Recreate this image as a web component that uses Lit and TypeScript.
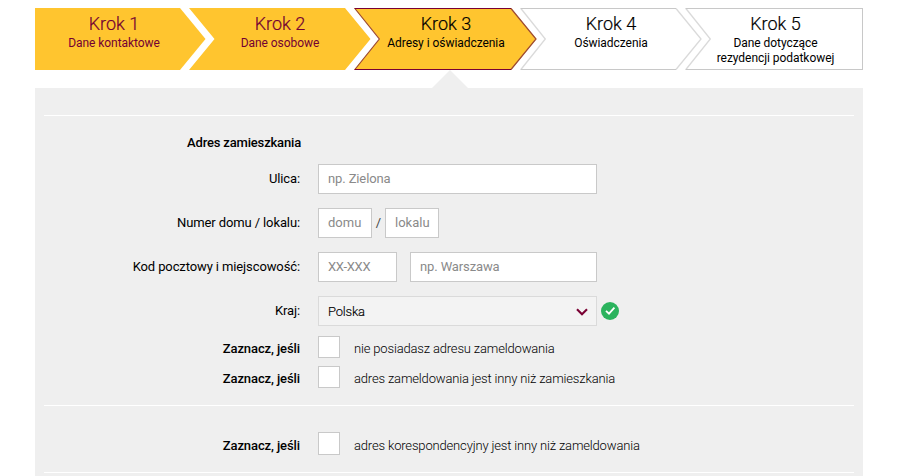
import { LitElement, html, svg, css } from "lit";
import { customElement } from "lit/decorators.js";
import { classMap } from "lit/directives/class-map.js";

type StepState = "done" | "current" | "next";
interface Step {
  title: string;
  lines: string[];
  state: StepState;
  width: number;
  center: number;
}

const STEPS: Step[] = [
  { title: "Krok 1", lines: ["Dane kontaktowe"], state: "done", width: 171, center: 79 },
  { title: "Krok 2", lines: ["Dane osobowe"], state: "done", width: 182, center: 91 },
  { title: "Krok 3", lines: ["Adresy i oświadczenia"], state: "current", width: 183, center: 92 },
  { title: "Krok 4", lines: ["Oświadczenia"], state: "next", width: 182, center: 91 },
  { title: "Krok 5", lines: ["Dane dotyczące", "rezydencji podatkowej"], state: "next", width: 178, center: 90.5 },
];

@customElement("step-bar")
export class StepBar extends LitElement {
  static styles = css`
    :host { display: block; }
    .steps { display: flex; height: 62px; }
    .step { display: grid; grid-template-columns: 0; flex: none; margin-left: -17px; height: 62px; }
    .step:first-child { margin-left: 0; }
    .shape, .text { grid-area: 1 / 1; }
    .shape { display: block; overflow: visible; }
    .done .shape { fill: #ffc52f; }
    .current .shape { fill: #ffc52f; }
    .side, .edge { fill: none; stroke-width: 1; }
    .current .side { stroke: #9c4a35; stroke-width: 1.2; }
    .current .edge { stroke: #7a0033; }
    .next .shape { fill: #fff; }
    .next .side { stroke: #dadada; stroke-width: 1.3; }
    .next .edge { stroke: #c8c8c8; }
    .text { padding-top: 4px; text-align: center; color: #000; white-space: nowrap; }
    .done .text { color: #730033; }
    .title { font-size: 18px; line-height: 23px; font-weight: 300; -webkit-text-stroke: 0.2px; }
    .line { font-size: 12px; line-height: 15px; letter-spacing: -0.05px; }
    .title + .line { padding-top: 1px; }
  `;

  private shape(step: Step, first: boolean, last: boolean) {
    const w = step.width;
    const r = last ? w : w - 26;
    const tip = last ? "" : `L${w - 0.5} 31`;
    const notch = first ? "" : "L25.5 31";
    const inner = last ? w - 0.5 : r;
    return html`<svg class="shape" width=${w} height="62" viewBox="0 0 ${w} 62">
      <path d="M0 0H${r}${tip}L${r} 62H0${notch}Z" />
      ${step.state === "done" ? "" : svg`
        <path class="side" d="M.9 .5L25.3 31L.9 61.5" />
        ${last ? "" : svg`<path class="side" d="M${r} .5L${w - 1} 31L${r} 61.5" />`}
        <path class="edge" d="M.5 .5H${inner}M.5 61.5H${inner}" />
        ${last ? svg`<path class="edge" d="M${w - 0.5} 0V62" />` : ""}`}
    </svg>`;
  }

  render() {
    return html`<nav class="steps">
      ${STEPS.map((s, i) => html`
        <div class=${classMap({ step: true, [s.state]: true })} style="width:${s.width}px">
          ${this.shape(s, i === 0, i === STEPS.length - 1)}
          <div class="text" style="width:${s.center * 2}px">
            <div class="title">${s.title}</div>
            ${s.lines.map((l) => html`<div class="line">${l}</div>`)}
          </div>
        </div>`)}
    </nav>`;
  }
}

@customElement("check-row")
export class CheckRow extends LitElement {
  static properties = { text: {} };
  declare text: string;
  static styles = css`
    :host { display: grid; grid-template-columns: 265px 1fr; column-gap: 18px; align-items: center; height: var(--box-height, 22px); }
    .label { text-align: right; font-weight: 500; padding-top: var(--text-drop, 3px); letter-spacing: -0.1px; }
    .choice { display: flex; align-items: center; }
    .box { box-sizing: border-box; width: 22px; height: var(--box-height, 22px); border: 1px solid #c9c9c9; background: #fff; }
    .caption { margin-left: 14px; font-weight: 300; padding-top: var(--text-drop, 3px); letter-spacing: -0.165px; }
  `;
  render() {
    return html`<span class="label">Zaznacz, jeśli</span>
      <span class="choice"><span class="box"></span><span class="caption">${this.text}</span></span>`;
  }
}

@customElement("app-root")
export class AppRoot extends LitElement {
  static styles = css`
    :host {
      display: block; box-sizing: border-box; height: 476px; overflow: hidden;
      padding: 8px 37px 0 35px; background: #fff; color: #000;
      font-family: Roboto, "Liberation Sans", sans-serif; font-size: 13px; line-height: 16px;
    }
    .pointer { display: block; margin-left: 397px; }
    .panel { background: #efefef; height: 388px; box-sizing: border-box; padding-top: 27px; }
    .rule { height: 1px; margin: 0 9px; background: #fff; }
    .heading { width: 266px; margin-top: 19px; text-align: right; font-weight: 500; letter-spacing: -0.17px; }
    .fields { display: grid; row-gap: 14px; margin-top: 13px; }
    .row { display: grid; grid-template-columns: 265px 1fr; column-gap: 18px; align-items: center; height: 30px; }
    .label { text-align: right; letter-spacing: -0.11px; }
    .controls { display: flex; align-items: center; }
    .input {
      box-sizing: border-box; height: 30px; padding: 6px 9px; border: 1px solid #c9c9c9;
      background: #fff; color: #8a8a8a; letter-spacing: -0.12px;
    }
    .street { width: 279px; }
    .short { width: 54px; letter-spacing: 0; }
    .zip { width: 79px; margin-right: 13px; letter-spacing: -0.3px; }
    .city { width: 187px; }
    .slash { width: 13px; text-align: center; color: #444; }
    .select {
      display: flex; align-items: center; justify-content: space-between; width: 279px;
      padding: 1px 8px 0 9px; border-color: #dadada; background: #f3f3f3; color: #000;
      font-weight: 300; letter-spacing: -0.2px; -webkit-text-stroke: 0.15px;
    }
    .ok { margin-left: 4px; }
    .checks { display: grid; row-gap: 8px; margin: 10px 0 17px; }
    .mailing { margin: 26px 0 17px; --box-height: 23px; --text-drop: 5px; }
  `;

  render() {
    return html`
      <step-bar></step-bar>
      <svg class="pointer" width="36" height="18" viewBox="0 0 36 18"><path d="M0 18L18 0L36 18Z" fill="#efefef" /></svg>
      <main class="panel">
        <div class="rule"></div>
        <div class="heading">Adres zamieszkania</div>
        <div class="fields">
          <div class="row"><span class="label">Ulica:</span>
            <div class="controls"><div class="input street">np. Zielona</div></div></div>
          <div class="row"><span class="label">Numer domu / lokalu:</span>
            <div class="controls"><div class="input short">domu</div><span class="slash">/</span><div class="input short">lokalu</div></div></div>
          <div class="row"><span class="label">Kod pocztowy i miejscowość:</span>
            <div class="controls"><div class="input zip">XX-XXX</div><div class="input city">np. Warszawa</div></div></div>
          <div class="row"><span class="label">Kraj:</span>
            <div class="controls">
              <div class="input select"><span>Polska</span>
                <svg width="12" height="8" viewBox="0 0 12 8"><path d="M1 1.2L6 6.2L11 1.2" fill="none" stroke="#7a0033" stroke-width="2.1" /></svg></div>
              <svg class="ok" width="18" height="18" viewBox="0 0 18 18"><circle cx="9" cy="9" r="9" fill="#2bb35d" /><path d="M5 8.8L8 11.7L13.4 5.7" fill="none" stroke="#fff" stroke-width="1.8" /></svg>
            </div></div>
        </div>
        <div class="checks">
          <check-row .text=${"nie posiadasz adresu zameldowania"}></check-row>
          <check-row .text=${"adres zameldowania jest inny niż zamieszkania"}></check-row>
        </div>
        <div class="rule"></div>
        <check-row class="mailing" .text=${"adres korespondencyjny jest inny niż zameldowania"}></check-row>
        <div class="rule"></div>
      </main>`;
  }
}
